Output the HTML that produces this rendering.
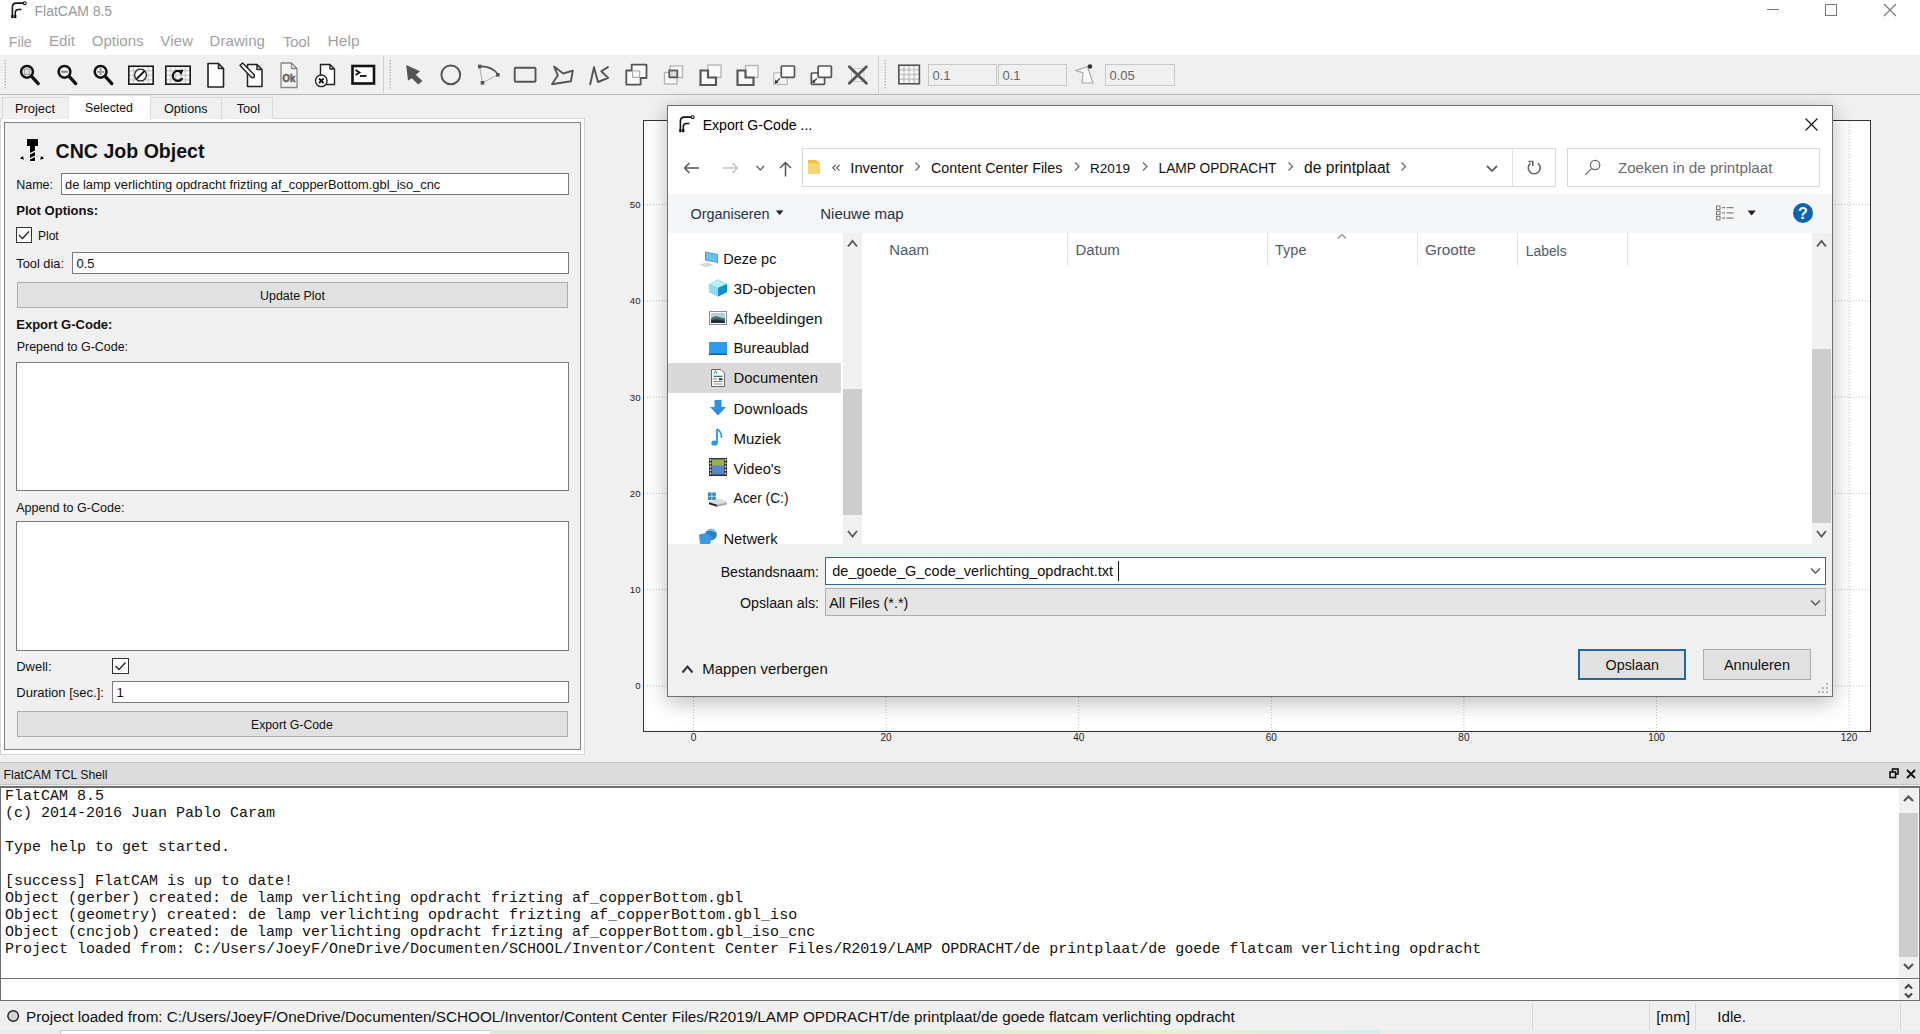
<!DOCTYPE html>
<html><head><meta charset="utf-8"><style>
html,body{margin:0;padding:0;}
body{width:1920px;height:1034px;overflow:hidden;position:relative;background:#f0f0f0;font-family:"Liberation Sans",sans-serif;}
.t{position:absolute;white-space:pre;line-height:20px;height:20px;}
.r{position:absolute;box-sizing:border-box;}
svg.r{overflow:visible;}
</style></head><body>
<div class="r" style="left:0px;top:0px;width:1920px;height:55px;background:#fff"></div>
<svg class="r" style="left:9px;top:0px;" width="20" height="20" viewBox="0 0 20 20"><path d="M3.4,18 V7.2 Q3.4,3.1 7.5,3.1 H14.3" fill="none" stroke="#111" stroke-width="1.6"/><circle cx="15.7" cy="3.2" r="1.45" fill="#fff" stroke="#111" stroke-width="1.1"/><path d="M6.3,18 V12.6 Q6.3,9.4 9.5,9.4 H11" fill="none" stroke="#111" stroke-width="1.5"/><circle cx="11.6" cy="9.5" r="1" fill="#333"/><rect x="2.4" y="15" width="2" height="3.2" fill="#000"/><rect x="5.3" y="15" width="2" height="3.2" fill="#000"/></svg>
<div class="t" style="left:34.60px;top:0.97px;font:13.95px 'Liberation Sans',sans-serif;line-height:20px;color:#999;">FlatCAM 8.5</div>
<div class="r" style="left:1767px;top:9px;width:12px;height:1px;background:#777"></div>
<div class="r" style="left:1825px;top:4px;width:12px;height:12px;border:1px solid #777"></div>
<svg class="r" style="left:1884px;top:4px;" width="12" height="12" viewBox="0 0 12 12"><path d="M0,0 L12,12 M12,0 L0,12" stroke="#777" stroke-width="1.1"/></svg>
<div class="t" style="left:8.75px;top:31.75px;font:14.27px 'Liberation Sans',sans-serif;line-height:20px;color:#a2a2a2;">File</div>
<div class="t" style="left:49.00px;top:31.47px;font:15.09px 'Liberation Sans',sans-serif;line-height:20px;color:#a2a2a2;">Edit</div>
<div class="t" style="left:91.70px;top:31.47px;font:15.09px 'Liberation Sans',sans-serif;line-height:20px;color:#a2a2a2;">Options</div>
<div class="t" style="left:160.30px;top:31.43px;font:15.21px 'Liberation Sans',sans-serif;line-height:20px;color:#a2a2a2;">View</div>
<div class="t" style="left:209.60px;top:31.46px;font:15.10px 'Liberation Sans',sans-serif;line-height:20px;color:#a2a2a2;">Drawing</div>
<div class="t" style="left:282.90px;top:31.58px;font:14.77px 'Liberation Sans',sans-serif;line-height:20px;color:#a2a2a2;">Tool</div>
<div class="t" style="left:327.60px;top:31.31px;font:15.56px 'Liberation Sans',sans-serif;line-height:20px;color:#a2a2a2;">Help</div>
<div class="r" style="left:0px;top:55px;width:1920px;height:39px;background:#f0f0f0"></div>
<div class="r" style="left:0px;top:94px;width:1920px;height:1px;background:#b9b9b9"></div>
<svg class="r" style="left:4px;top:60px;" width="3" height="30" viewBox="0 0 3 30"><rect x="0.5" y="0" width="1.5" height="1.5" fill="#b9b9b9"/><rect x="0.5" y="3" width="1.5" height="1.5" fill="#b9b9b9"/><rect x="0.5" y="6" width="1.5" height="1.5" fill="#b9b9b9"/><rect x="0.5" y="9" width="1.5" height="1.5" fill="#b9b9b9"/><rect x="0.5" y="12" width="1.5" height="1.5" fill="#b9b9b9"/><rect x="0.5" y="15" width="1.5" height="1.5" fill="#b9b9b9"/><rect x="0.5" y="18" width="1.5" height="1.5" fill="#b9b9b9"/><rect x="0.5" y="21" width="1.5" height="1.5" fill="#b9b9b9"/><rect x="0.5" y="24" width="1.5" height="1.5" fill="#b9b9b9"/><rect x="0.5" y="27" width="1.5" height="1.5" fill="#b9b9b9"/></svg>
<svg class="r" style="left:389px;top:60px;" width="3" height="30" viewBox="0 0 3 30"><rect x="0.5" y="0" width="1.5" height="1.5" fill="#b9b9b9"/><rect x="0.5" y="3" width="1.5" height="1.5" fill="#b9b9b9"/><rect x="0.5" y="6" width="1.5" height="1.5" fill="#b9b9b9"/><rect x="0.5" y="9" width="1.5" height="1.5" fill="#b9b9b9"/><rect x="0.5" y="12" width="1.5" height="1.5" fill="#b9b9b9"/><rect x="0.5" y="15" width="1.5" height="1.5" fill="#b9b9b9"/><rect x="0.5" y="18" width="1.5" height="1.5" fill="#b9b9b9"/><rect x="0.5" y="21" width="1.5" height="1.5" fill="#b9b9b9"/><rect x="0.5" y="24" width="1.5" height="1.5" fill="#b9b9b9"/><rect x="0.5" y="27" width="1.5" height="1.5" fill="#b9b9b9"/></svg>
<svg class="r" style="left:884px;top:60px;" width="3" height="30" viewBox="0 0 3 30"><rect x="0.5" y="0" width="1.5" height="1.5" fill="#b9b9b9"/><rect x="0.5" y="3" width="1.5" height="1.5" fill="#b9b9b9"/><rect x="0.5" y="6" width="1.5" height="1.5" fill="#b9b9b9"/><rect x="0.5" y="9" width="1.5" height="1.5" fill="#b9b9b9"/><rect x="0.5" y="12" width="1.5" height="1.5" fill="#b9b9b9"/><rect x="0.5" y="15" width="1.5" height="1.5" fill="#b9b9b9"/><rect x="0.5" y="18" width="1.5" height="1.5" fill="#b9b9b9"/><rect x="0.5" y="21" width="1.5" height="1.5" fill="#b9b9b9"/><rect x="0.5" y="24" width="1.5" height="1.5" fill="#b9b9b9"/><rect x="0.5" y="27" width="1.5" height="1.5" fill="#b9b9b9"/></svg>
<div class="r" style="left:383px;top:56px;width:1px;height:37px;background:#d0d0d0"></div>
<div class="r" style="left:878px;top:56px;width:1px;height:37px;background:#d0d0d0"></div>
<svg class="r" style="left:0px;top:0px;" width="400" height="95" viewBox="0 0 400 95"><circle cx="27" cy="71.8" r="5.9" fill="none" stroke="#111" stroke-width="2.5"/><path d="M31.6,76.4 L38.2,83.6" stroke="#111" stroke-width="3.3" stroke-linecap="round"/><rect x="24.3" y="69.1" width="5.4" height="5.4" fill="#ddd" stroke="#999" stroke-width="1"/><circle cx="64.5" cy="71.8" r="5.9" fill="none" stroke="#111" stroke-width="2.5"/><path d="M69.1,76.4 L75.7,83.6" stroke="#111" stroke-width="3.3" stroke-linecap="round"/><path d="M61,71.8 H68" stroke="#888" stroke-width="2"/><circle cx="100.6" cy="71.8" r="5.9" fill="none" stroke="#111" stroke-width="2.5"/><path d="M105.19999999999999,76.4 L111.8,83.6" stroke="#111" stroke-width="3.3" stroke-linecap="round"/><path d="M97,71.8 H104.2 M100.6,68.3 V75.3" stroke="#999" stroke-width="1.8"/><rect x="128.8" y="66.2" width="24.4" height="18" fill="#cfcfcf"/><ellipse cx="131.24" cy="68.45" rx="2.1" ry="1.7" fill="#fafafa"/><ellipse cx="131.24" cy="72.95" rx="2.1" ry="1.7" fill="#fafafa"/><ellipse cx="131.24" cy="77.45" rx="2.1" ry="1.7" fill="#fafafa"/><ellipse cx="131.24" cy="81.95" rx="2.1" ry="1.7" fill="#fafafa"/><ellipse cx="136.12" cy="68.45" rx="2.1" ry="1.7" fill="#fafafa"/><ellipse cx="136.12" cy="72.95" rx="2.1" ry="1.7" fill="#fafafa"/><ellipse cx="136.12" cy="77.45" rx="2.1" ry="1.7" fill="#fafafa"/><ellipse cx="136.12" cy="81.95" rx="2.1" ry="1.7" fill="#fafafa"/><ellipse cx="141.00" cy="68.45" rx="2.1" ry="1.7" fill="#fafafa"/><ellipse cx="141.00" cy="72.95" rx="2.1" ry="1.7" fill="#fafafa"/><ellipse cx="141.00" cy="77.45" rx="2.1" ry="1.7" fill="#fafafa"/><ellipse cx="141.00" cy="81.95" rx="2.1" ry="1.7" fill="#fafafa"/><ellipse cx="145.88" cy="68.45" rx="2.1" ry="1.7" fill="#fafafa"/><ellipse cx="145.88" cy="72.95" rx="2.1" ry="1.7" fill="#fafafa"/><ellipse cx="145.88" cy="77.45" rx="2.1" ry="1.7" fill="#fafafa"/><ellipse cx="145.88" cy="81.95" rx="2.1" ry="1.7" fill="#fafafa"/><ellipse cx="150.76" cy="68.45" rx="2.1" ry="1.7" fill="#fafafa"/><ellipse cx="150.76" cy="72.95" rx="2.1" ry="1.7" fill="#fafafa"/><ellipse cx="150.76" cy="77.45" rx="2.1" ry="1.7" fill="#fafafa"/><ellipse cx="150.76" cy="81.95" rx="2.1" ry="1.7" fill="#fafafa"/><rect x="128.8" y="66.2" width="24.4" height="18" fill="none" stroke="#111" stroke-width="1.5"/><circle cx="140.5" cy="75" r="5.9" fill="#fff" stroke="#222" stroke-width="1.3"/><path d="M136.6,78.9 L144.4,71.1" stroke="#111" stroke-width="1.9"/><rect x="165.8" y="66.2" width="24.4" height="18" fill="#cfcfcf"/><ellipse cx="168.24" cy="68.45" rx="2.1" ry="1.7" fill="#fafafa"/><ellipse cx="168.24" cy="72.95" rx="2.1" ry="1.7" fill="#fafafa"/><ellipse cx="168.24" cy="77.45" rx="2.1" ry="1.7" fill="#fafafa"/><ellipse cx="168.24" cy="81.95" rx="2.1" ry="1.7" fill="#fafafa"/><ellipse cx="173.12" cy="68.45" rx="2.1" ry="1.7" fill="#fafafa"/><ellipse cx="173.12" cy="72.95" rx="2.1" ry="1.7" fill="#fafafa"/><ellipse cx="173.12" cy="77.45" rx="2.1" ry="1.7" fill="#fafafa"/><ellipse cx="173.12" cy="81.95" rx="2.1" ry="1.7" fill="#fafafa"/><ellipse cx="178.00" cy="68.45" rx="2.1" ry="1.7" fill="#fafafa"/><ellipse cx="178.00" cy="72.95" rx="2.1" ry="1.7" fill="#fafafa"/><ellipse cx="178.00" cy="77.45" rx="2.1" ry="1.7" fill="#fafafa"/><ellipse cx="178.00" cy="81.95" rx="2.1" ry="1.7" fill="#fafafa"/><ellipse cx="182.88" cy="68.45" rx="2.1" ry="1.7" fill="#fafafa"/><ellipse cx="182.88" cy="72.95" rx="2.1" ry="1.7" fill="#fafafa"/><ellipse cx="182.88" cy="77.45" rx="2.1" ry="1.7" fill="#fafafa"/><ellipse cx="182.88" cy="81.95" rx="2.1" ry="1.7" fill="#fafafa"/><ellipse cx="187.76" cy="68.45" rx="2.1" ry="1.7" fill="#fafafa"/><ellipse cx="187.76" cy="72.95" rx="2.1" ry="1.7" fill="#fafafa"/><ellipse cx="187.76" cy="77.45" rx="2.1" ry="1.7" fill="#fafafa"/><ellipse cx="187.76" cy="81.95" rx="2.1" ry="1.7" fill="#fafafa"/><rect x="165.8" y="66.2" width="24.4" height="18" fill="none" stroke="#111" stroke-width="1.5"/><path d="M181.5,72.5 A5,5 0 1 0 182.3,78" fill="none" stroke="#111" stroke-width="2.2"/><path d="M177.5,70.5 L183.5,69.5 L181.5,75 Z" fill="#111"/><path d="M208,63.5 H218.5 L223.5,68.5 V87 H208 Z M218.5,63.5 V68.5 H223.5" fill="#fff" stroke="#222" stroke-width="1.6" stroke-linejoin="round"/><path d="M247.5,64.5 H257 L262,69.5 V86.5 H247.5 Z M257,64.5 V69.5 H262" fill="#fff" stroke="#222" stroke-width="1.5" stroke-linejoin="round"/><path d="M240,65.5 L242.5,63 L254.5,75 L254,77.5 L251.5,77.5 Z" fill="#fff" stroke="#222" stroke-width="1.4" stroke-linejoin="round"/><path d="M281,63 H291.5 L297,68.5 V87.5 H281 Z M291.5,63 V68.5 H297" fill="#f4f4f4" stroke="#888" stroke-width="1.3" stroke-linejoin="round"/><text x="282.6" y="81.8" style="font:bold 11.5px 'Liberation Sans'" fill="#666" stroke="#666" stroke-width="0.7" textLength="12.6" lengthAdjust="spacingAndGlyphs">Ok</text><path d="M320.5,64.5 H330 L334.5,69 V84.5 H320.5 Z M330,64.5 V69 H334.5" fill="#fff" stroke="#222" stroke-width="1.4" stroke-linejoin="round"/><circle cx="321.3" cy="80.8" r="5.8" fill="#fff" stroke="#222" stroke-width="1.4"/><path d="M319,78.5 L323.6,83.1 M323.6,78.5 L319,83.1" stroke="#111" stroke-width="1.8"/><rect x="352.5" y="66" width="21.5" height="17.5" fill="#fff" stroke="#111" stroke-width="2.6"/><path d="M355.5,70 L359.5,72.5 L355.5,75" fill="none" stroke="#111" stroke-width="1.8"/><path d="M360,76 H366.5" stroke="#111" stroke-width="1.8"/></svg>
<svg class="r" style="left:0px;top:0px;" width="880" height="95" viewBox="0 0 880 95"><path d="M406.2,65.1 L420,71.2 L415.8,74.8 L422.4,81 L418.3,84.6 L411.8,78.3 L408,80.5 Z" fill="#555"/><circle cx="450.8" cy="74.8" r="9.4" fill="none" stroke="#555" stroke-width="2"/><path d="M479.5,66.5 Q492,66 498,74.5" fill="none" stroke="#555" stroke-width="1.8"/><path d="M479.5,66.5 L482.5,83 L498,74.5" fill="none" stroke="#999" stroke-width="0.8"/><rect x="478" y="64.7" width="3.6" height="3.6" fill="#555"/><rect x="496" y="73" width="3.6" height="3.6" fill="#555"/><rect x="480.7" y="81" width="3.6" height="3.6" fill="#555"/><rect x="514.7" y="67.8" width="20.8" height="13.9" rx="1" fill="none" stroke="#555" stroke-width="1.9"/><path d="M554.1,66.6 L563.2,73.5 L572.8,70.6 L570.9,81.3 L552,84.2 L557.8,75.3 Z" fill="none" stroke="#555" stroke-width="1.9" stroke-linejoin="round"/><path d="M590.2,84.2 L594,67.2 L598,82 L608.2,77.9 L601.3,71.3 L607.9,67.1" fill="none" stroke="#555" stroke-width="1.9" stroke-linejoin="round" stroke-linecap="round"/><path d="M626.3,70.5 H631.7 V64.7 H646.5 V78 H640.6 V84.6 H626.3 Z" fill="#fafafa" stroke="#555" stroke-width="1.8" stroke-linejoin="round"/><path d="M632.6,70.9 H639.6 V77.3 H632.6 Z" fill="none" stroke="#b0b0b0" stroke-width="1.3" stroke-linejoin="round"/><rect x="664.5" y="72.5" width="12.5" height="11.5" fill="#f6f6f6" stroke="#b2b2b2" stroke-width="1.3"/><rect x="670" y="66" width="12.5" height="11.5" fill="#f6f6f6" stroke="#b2b2b2" stroke-width="1.3"/><rect x="669.3" y="70.5" width="8" height="6.8" fill="#ddd" stroke="#585858" stroke-width="1.8"/><rect x="708" y="65" width="13" height="12.5" fill="#f8f8f8" stroke="#b2b2b2" stroke-width="1.3"/><path d="M700.5,85 V70.5 H708 V77.5 H716 V85 Z" fill="#f8f8f8" stroke="#585858" stroke-width="2.2"/><rect x="745.5" y="65.5" width="12.5" height="12" fill="#f8f8f8" stroke="#b2b2b2" stroke-width="1.3"/><path d="M737.5,85 V70.5 H745.5 V77.5 H753.5 V85 Z" fill="#f8f8f8" stroke="#585858" stroke-width="2.2"/><rect x="773.8" y="72.8" width="13.5" height="11.6" fill="#f4f4f4" stroke="#b8b8b8" stroke-width="1.2"/><rect x="781.3" y="66" width="13.2" height="11.3" rx="0.8" fill="#fafafa" stroke="#555" stroke-width="1.7"/><path d="M775.2,83 L779.8,78.3" stroke="#333" stroke-width="1.2"/><path d="M774.6,83.6 L775.4,79.6 L778.6,82.8 Z" fill="#333"/><rect x="811.3" y="73" width="13.3" height="11.3" rx="0.8" fill="#f8f8f8" stroke="#555" stroke-width="1.7"/><rect x="818.2" y="66" width="13.2" height="11.3" rx="0.8" fill="#fafafa" stroke="#555" stroke-width="1.7"/><path d="M812.8,82.5 L816.8,78.5" stroke="#333" stroke-width="1.1"/><path d="M812.3,83 L812.9,79.6 L815.7,82.4 Z" fill="#333"/><rect x="851.5" y="68.5" width="12.5" height="13" fill="none" stroke="#cfcfcf" stroke-width="1"/><path d="M849.3,66.8 L866.4,83.2 M866.4,66.8 L849.3,83.2" stroke="#555" stroke-width="2.8" stroke-linecap="round"/></svg>
<svg class="r" style="left:0px;top:0px;" width="1200" height="95" viewBox="0 0 1200 95"><rect x="898.8" y="65.2" width="20.6" height="18.6" fill="#c8c8c8"/><ellipse cx="901.38" cy="67.53" rx="2" ry="1.8" fill="#fafafa"/><ellipse cx="901.38" cy="72.17" rx="2" ry="1.8" fill="#fafafa"/><ellipse cx="901.38" cy="76.83" rx="2" ry="1.8" fill="#fafafa"/><ellipse cx="901.38" cy="81.48" rx="2" ry="1.8" fill="#fafafa"/><ellipse cx="906.52" cy="67.53" rx="2" ry="1.8" fill="#fafafa"/><ellipse cx="906.52" cy="72.17" rx="2" ry="1.8" fill="#fafafa"/><ellipse cx="906.52" cy="76.83" rx="2" ry="1.8" fill="#fafafa"/><ellipse cx="906.52" cy="81.48" rx="2" ry="1.8" fill="#fafafa"/><ellipse cx="911.67" cy="67.53" rx="2" ry="1.8" fill="#fafafa"/><ellipse cx="911.67" cy="72.17" rx="2" ry="1.8" fill="#fafafa"/><ellipse cx="911.67" cy="76.83" rx="2" ry="1.8" fill="#fafafa"/><ellipse cx="911.67" cy="81.48" rx="2" ry="1.8" fill="#fafafa"/><ellipse cx="916.82" cy="67.53" rx="2" ry="1.8" fill="#fafafa"/><ellipse cx="916.82" cy="72.17" rx="2" ry="1.8" fill="#fafafa"/><ellipse cx="916.82" cy="76.83" rx="2" ry="1.8" fill="#fafafa"/><ellipse cx="916.82" cy="81.48" rx="2" ry="1.8" fill="#fafafa"/><rect x="898.8" y="65.2" width="20.6" height="18.6" fill="none" stroke="#555" stroke-width="1.6"/><path d="M1076,70.5 L1087.5,66.5 L1093,83 H1082 L1083,73 Z" fill="#f8f8f8" stroke="#aaa" stroke-width="1.2"/><circle cx="1090" cy="66.5" r="2.3" fill="#333"/></svg>
<div class="r" style="left:928px;top:64px;width:69px;height:22px;border:1px solid #c8c8c8;background:#f0f0f0"></div>
<div class="t" style="left:932.50px;top:65.79px;font:13.00px 'Liberation Sans',sans-serif;line-height:20px;color:#666;">0.1</div>
<div class="r" style="left:998px;top:64px;width:69px;height:22px;border:1px solid #c8c8c8;background:#f0f0f0"></div>
<div class="t" style="left:1002.50px;top:65.79px;font:13.00px 'Liberation Sans',sans-serif;line-height:20px;color:#666;">0.1</div>
<div class="r" style="left:1105px;top:64px;width:70px;height:22px;border:1px solid #c8c8c8;background:#f0f0f0"></div>
<div class="t" style="left:1109.50px;top:65.79px;font:13.00px 'Liberation Sans',sans-serif;line-height:20px;color:#666;">0.05</div>
<div class="r" style="left:0px;top:118px;width:585px;height:637px;background:#fff;border:1px solid #d6d6d6"></div>
<div class="r" style="left:4px;top:122px;width:577px;height:628px;border:1px solid #828282;background:#f0f0f0"></div>
<div class="r" style="left:2px;top:97px;width:67px;height:22px;background:#f0f0f0;border:1px solid #d9d9d9;border-bottom:none"></div>
<div class="r" style="left:68px;top:95px;width:83px;height:25px;background:#fff;border:1px solid #e6e6e6;border-bottom:none"></div>
<div class="r" style="left:150px;top:97px;width:72px;height:22px;background:#f0f0f0;border:1px solid #d9d9d9;border-bottom:none"></div>
<div class="r" style="left:221px;top:97px;width:52px;height:22px;background:#f0f0f0;border:1px solid #d9d9d9;border-bottom:none"></div>
<div class="t" style="left:15.00px;top:98.84px;font:12.85px 'Liberation Sans',sans-serif;line-height:20px;color:#111;">Project</div>
<div class="t" style="left:85.00px;top:97.92px;font:12.33px 'Liberation Sans',sans-serif;line-height:20px;color:#111;">Selected</div>
<div class="t" style="left:164.00px;top:98.92px;font:12.62px 'Liberation Sans',sans-serif;line-height:20px;color:#111;">Options</div>
<div class="t" style="left:236.70px;top:98.90px;font:12.70px 'Liberation Sans',sans-serif;line-height:20px;color:#111;">Tool</div>
<svg class="r" style="left:18px;top:137px;" width="28" height="26" viewBox="0 0 28 26"><g stroke="#fff" stroke-width="2.2" stroke-linejoin="round" fill="#fff"><path d="M9,2 H20 V9 H17 V13.5 L12,16 V9 H9 Z"/><path d="M12,17.5 L17,15 V18.5 L12,21 Z M12,22.5 L17,20 V24 H12 Z"/><path d="M1.9,21.4 L5,18.7 L5.9,22.8 Z M26.2,21.4 L23,18.7 L22.2,22.8 Z"/></g><g fill="#000"><path d="M9,2 H20 V9 H17 V13.5 L12,16 V9 H9 Z"/><path d="M12,17.5 L17,15 V18.5 L12,21 Z M12,22.5 L17,20 V24 H12 Z"/><path d="M1.9,21.4 L5,18.7 L5.9,22.8 Z M26.2,21.4 L23,18.7 L22.2,22.8 Z"/></g></svg>
<div class="t" style="left:55.60px;top:140.71px;font:bold 19.57px 'Liberation Sans',sans-serif;line-height:20px;color:#111;">CNC Job Object</div>
<div class="t" style="left:16.25px;top:175.08px;font:12.46px 'Liberation Sans',sans-serif;line-height:20px;color:#111;">Name:</div>
<div class="r" style="left:61px;top:173px;width:508px;height:22px;background:#fff;border:1px solid #7a7a7a"></div>
<div class="t" style="left:65.00px;top:174.94px;font:12.87px 'Liberation Sans',sans-serif;line-height:20px;color:#111;">de lamp verlichting opdracht frizting af_copperBottom.gbl_iso_cnc</div>
<div class="t" style="left:16.25px;top:200.77px;font:bold 13.06px 'Liberation Sans',sans-serif;line-height:20px;color:#111;">Plot Options:</div>
<div class="r" style="left:16px;top:227px;width:16px;height:16px;background:#fff;border:1px solid #333"></div>
<svg class="r" style="left:16px;top:227px;" width="16" height="16" viewBox="0 0 16 16"><path d="M3,8 L6.5,11.5 L13,4.5" fill="none" stroke="#222" stroke-width="1.3"/></svg>
<div class="t" style="left:38.00px;top:226.14px;font:12.01px 'Liberation Sans',sans-serif;line-height:20px;color:#111;">Plot</div>
<div class="t" style="left:16.25px;top:253.95px;font:12.83px 'Liberation Sans',sans-serif;line-height:20px;color:#111;">Tool dia:</div>
<div class="r" style="left:72px;top:252px;width:497px;height:22px;background:#fff;border:1px solid #7a7a7a"></div>
<div class="t" style="left:76.50px;top:253.89px;font:13.00px 'Liberation Sans',sans-serif;line-height:20px;color:#111;">0.5</div>
<div class="r" style="left:17px;top:282px;width:551px;height:26px;background:#e1e1e1;border:1px solid #adadad"></div>
<div class="t" style="left:260.00px;top:285.99px;font:12.44px 'Liberation Sans',sans-serif;line-height:20px;color:#111;">Update Plot</div>
<div class="t" style="left:16.25px;top:315.48px;font:bold 13.03px 'Liberation Sans',sans-serif;line-height:20px;color:#111;">Export G-Code:</div>
<div class="t" style="left:16.70px;top:337.49px;font:12.44px 'Liberation Sans',sans-serif;line-height:20px;color:#111;">Prepend to G-Code:</div>
<div class="r" style="left:16px;top:362px;width:553px;height:129px;background:#fff;border:1px solid #7a7a7a"></div>
<div class="t" style="left:16.25px;top:497.55px;font:12.56px 'Liberation Sans',sans-serif;line-height:20px;color:#111;">Append to G-Code:</div>
<div class="r" style="left:16px;top:521px;width:553px;height:130px;background:#fff;border:1px solid #7a7a7a"></div>
<div class="t" style="left:16.25px;top:656.76px;font:12.96px 'Liberation Sans',sans-serif;line-height:20px;color:#111;">Dwell:</div>
<div class="r" style="left:112px;top:658px;width:17px;height:16px;background:#fff;border:1px solid #333"></div>
<svg class="r" style="left:112px;top:658px;" width="17" height="16" viewBox="0 0 17 16"><path d="M3.5,8 L7,11.5 L13.5,4.5" fill="none" stroke="#222" stroke-width="1.3"/></svg>
<div class="t" style="left:16.25px;top:683.27px;font:13.06px 'Liberation Sans',sans-serif;line-height:20px;color:#111;">Duration [sec.]:</div>
<div class="r" style="left:112px;top:681px;width:457px;height:22px;background:#fff;border:1px solid #7a7a7a"></div>
<div class="t" style="left:116.60px;top:683.29px;font:13.00px 'Liberation Sans',sans-serif;line-height:20px;color:#111;">1</div>
<div class="r" style="left:17px;top:711px;width:551px;height:26px;background:#e1e1e1;border:1px solid #adadad"></div>
<div class="t" style="left:251.00px;top:715.25px;font:12.26px 'Liberation Sans',sans-serif;line-height:20px;color:#111;">Export G-Code</div>
<div class="r" style="left:643px;top:120px;width:1228px;height:612px;background:#fff;border:1px solid #333"></div>
<svg class="r" style="left:0px;top:0px;" width="1920" height="760" viewBox="0 0 1920 760"><path d="M693.5,121 V731" stroke="#c0c0c0" stroke-width="1" stroke-dasharray="1 2"/><path d="M886.1,121 V731" stroke="#c0c0c0" stroke-width="1" stroke-dasharray="1 2"/><path d="M1078.7,121 V731" stroke="#c0c0c0" stroke-width="1" stroke-dasharray="1 2"/><path d="M1271.3,121 V731" stroke="#c0c0c0" stroke-width="1" stroke-dasharray="1 2"/><path d="M1463.9,121 V731" stroke="#c0c0c0" stroke-width="1" stroke-dasharray="1 2"/><path d="M1656.5,121 V731" stroke="#c0c0c0" stroke-width="1" stroke-dasharray="1 2"/><path d="M1849.1,121 V731" stroke="#c0c0c0" stroke-width="1" stroke-dasharray="1 2"/><path d="M644,686.0 H1871" stroke="#c0c0c0" stroke-width="1" stroke-dasharray="1 2"/><path d="M644,589.7 H1871" stroke="#c0c0c0" stroke-width="1" stroke-dasharray="1 2"/><path d="M644,493.4 H1871" stroke="#c0c0c0" stroke-width="1" stroke-dasharray="1 2"/><path d="M644,397.1 H1871" stroke="#c0c0c0" stroke-width="1" stroke-dasharray="1 2"/><path d="M644,300.8 H1871" stroke="#c0c0c0" stroke-width="1" stroke-dasharray="1 2"/><path d="M644,204.5 H1871" stroke="#c0c0c0" stroke-width="1" stroke-dasharray="1 2"/></svg>
<div class="t" style="left:690.72px;top:728.03px;font:10.00px 'Liberation Sans',sans-serif;line-height:20px;color:#222;">0</div>
<div class="t" style="left:880.54px;top:728.03px;font:10.00px 'Liberation Sans',sans-serif;line-height:20px;color:#222;">20</div>
<div class="t" style="left:1073.14px;top:728.03px;font:10.00px 'Liberation Sans',sans-serif;line-height:20px;color:#222;">40</div>
<div class="t" style="left:1265.74px;top:728.03px;font:10.00px 'Liberation Sans',sans-serif;line-height:20px;color:#222;">60</div>
<div class="t" style="left:1458.34px;top:728.03px;font:10.00px 'Liberation Sans',sans-serif;line-height:20px;color:#222;">80</div>
<div class="t" style="left:1648.16px;top:728.03px;font:10.00px 'Liberation Sans',sans-serif;line-height:20px;color:#222;">100</div>
<div class="t" style="left:1840.76px;top:728.03px;font:10.00px 'Liberation Sans',sans-serif;line-height:20px;color:#222;">120</div>
<div class="t" style="left:635.16px;top:676.47px;font:9.60px 'Liberation Sans',sans-serif;line-height:20px;color:#222;">0</div>
<div class="t" style="left:629.82px;top:580.17px;font:9.60px 'Liberation Sans',sans-serif;line-height:20px;color:#222;">10</div>
<div class="t" style="left:629.82px;top:483.87px;font:9.60px 'Liberation Sans',sans-serif;line-height:20px;color:#222;">20</div>
<div class="t" style="left:629.82px;top:387.57px;font:9.60px 'Liberation Sans',sans-serif;line-height:20px;color:#222;">30</div>
<div class="t" style="left:629.82px;top:291.27px;font:9.60px 'Liberation Sans',sans-serif;line-height:20px;color:#222;">40</div>
<div class="t" style="left:629.82px;top:194.97px;font:9.60px 'Liberation Sans',sans-serif;line-height:20px;color:#222;">50</div>
<div class="r" style="left:0px;top:762px;width:1920px;height:23px;background:#dcdcdc;border-top:1px solid #c6c6c6;border-bottom:1px solid #c6c6c6"></div>
<div class="t" style="left:3.60px;top:764.66px;font:12.23px 'Liberation Sans',sans-serif;line-height:20px;color:#111;">FlatCAM TCL Shell</div>
<svg class="r" style="left:1889px;top:768px;" width="10" height="11" viewBox="0 0 10 11"><rect x="3.5" y="1" width="5.5" height="5" fill="none" stroke="#111" stroke-width="1.6"/><rect x="1" y="4" width="5.5" height="5.5" fill="#dcdcdc" stroke="#111" stroke-width="1.6"/></svg>
<svg class="r" style="left:1906px;top:769px;" width="10" height="10" viewBox="0 0 10 10"><path d="M1,1 L9,9 M9,1 L1,9" stroke="#111" stroke-width="1.8"/></svg>
<div class="r" style="left:0px;top:786px;width:1920px;height:194px;background:#fff;border:1px solid #6e6e6e;border-width:2px 1px 2px 1px"></div>
<div class="r" style="left:1899px;top:788px;width:19px;height:190px;background:#f0f0f0"></div>
<div class="r" style="left:1899px;top:813px;width:19px;height:144px;background:#cdcdcd"></div>
<svg class="r" style="left:1899px;top:788px;" width="19" height="190" viewBox="0 0 19 190"><path d="M5,13 L9.5,8.5 L14,13" fill="none" stroke="#555" stroke-width="2.2"/><path d="M5,176 L9.5,180.5 L14,176" fill="none" stroke="#555" stroke-width="2.2"/></svg>
<div class="t" style="left:5.00px;top:786.51px;font:15.00px 'Liberation Mono',monospace;line-height:20px;color:#111;">FlatCAM 8.5</div>
<div class="t" style="left:5.00px;top:803.51px;font:15.00px 'Liberation Mono',monospace;line-height:20px;color:#111;">(c) 2014-2016 Juan Pablo Caram</div>
<div class="t" style="left:5.00px;top:837.51px;font:15.00px 'Liberation Mono',monospace;line-height:20px;color:#111;">Type help to get started.</div>
<div class="t" style="left:5.00px;top:871.51px;font:15.00px 'Liberation Mono',monospace;line-height:20px;color:#111;">[success] FlatCAM is up to date!</div>
<div class="t" style="left:5.00px;top:888.51px;font:15.00px 'Liberation Mono',monospace;line-height:20px;color:#111;">Object (gerber) created: de lamp verlichting opdracht frizting af_copperBottom.gbl</div>
<div class="t" style="left:5.00px;top:905.51px;font:15.00px 'Liberation Mono',monospace;line-height:20px;color:#111;">Object (geometry) created: de lamp verlichting opdracht frizting af_copperBottom.gbl_iso</div>
<div class="t" style="left:5.00px;top:922.51px;font:15.00px 'Liberation Mono',monospace;line-height:20px;color:#111;">Object (cncjob) created: de lamp verlichting opdracht frizting af_copperBottom.gbl_iso_cnc</div>
<div class="t" style="left:5.00px;top:939.51px;font:15.00px 'Liberation Mono',monospace;line-height:20px;color:#111;">Project loaded from: C:/Users/JoeyF/OneDrive/Documenten/SCHOOL/Inventor/Content Center Files/R2019/LAMP OPDRACHT/de printplaat/de goede flatcam verlichting opdracht</div>
<div class="r" style="left:0px;top:979px;width:1920px;height:22px;background:#fff;border:1px solid #6e6e6e;border-top:none"></div>
<div class="r" style="left:1899px;top:980px;width:19px;height:20px;background:#f0f0f0"></div>
<svg class="r" style="left:1899px;top:980px;" width="19" height="20" viewBox="0 0 19 20"><path d="M6,8.5 L9.5,5 L13,8.5" fill="none" stroke="#444" stroke-width="2"/><path d="M6,13.5 L9.5,17 L13,13.5" fill="none" stroke="#444" stroke-width="2"/></svg>
<svg class="r" style="left:1906px;top:1016px;" width="14" height="14" viewBox="0 0 14 14"><rect x="9" y="2" width="2" height="2" fill="#c4c4c4"/><rect x="5" y="6" width="2" height="2" fill="#c4c4c4"/><rect x="9" y="6" width="2" height="2" fill="#c4c4c4"/><rect x="1" y="10" width="2" height="2" fill="#c4c4c4"/><rect x="5" y="10" width="2" height="2" fill="#c4c4c4"/><rect x="9" y="10" width="2" height="2" fill="#c4c4c4"/></svg>
<div class="r" style="left:0px;top:1001px;width:1920px;height:33px;background:#f0f0f0"></div>
<svg class="r" style="left:6px;top:1009px;" width="14" height="14" viewBox="0 0 14 14"><circle cx="7.2" cy="7" r="5.3" fill="#d4d4d4" stroke="#222" stroke-width="1.4"/></svg>
<div class="t" style="left:26.00px;top:1006.60px;font:15.28px 'Liberation Sans',sans-serif;line-height:20px;color:#111;">Project loaded from: C:/Users/JoeyF/OneDrive/Documenten/SCHOOL/Inventor/Content Center Files/R2019/LAMP OPDRACHT/de printplaat/de goede flatcam verlichting opdracht</div>
<div class="r" style="left:1532px;top:1003px;width:1px;height:27px;background:#dadada"></div>
<div class="r" style="left:1649px;top:1003px;width:1px;height:27px;background:#dadada"></div>
<div class="r" style="left:1695px;top:1003px;width:1px;height:27px;background:#dadada"></div>
<div class="r" style="left:1900px;top:1003px;width:1px;height:27px;background:#dadada"></div>
<div class="t" style="left:1656.30px;top:1006.64px;font:15.17px 'Liberation Sans',sans-serif;line-height:20px;color:#111;">[mm]</div>
<div class="t" style="left:1717.30px;top:1006.64px;font:15.18px 'Liberation Sans',sans-serif;line-height:20px;color:#111;">Idle.</div>
<div class="r" style="left:0px;top:1030px;width:1920px;height:4px;background:#ececec"></div>
<div class="r" style="left:60px;top:1030px;width:430px;height:4px;background:#fff;border-top:1px solid #c8c8c8;border-left:1px solid #c8c8c8"></div>
<div class="r" style="left:490px;top:1030px;width:890px;height:4px;background:linear-gradient(90deg,#d6ecd6 0%,#dcefd0 50%,#e6f2c8 75%,#d4eef0 100%)"></div>
<div class="r" style="left:667px;top:105px;width:1166px;height:592px;background:#f0f0f0;border:1px solid #707070;box-shadow:0 5px 20px rgba(0,0,0,0.28)"></div>
<div class="r" style="left:668px;top:106px;width:1164px;height:88px;background:#fff"></div>
<svg class="r" style="left:677px;top:114px;" width="20" height="20" viewBox="0 0 20 20"><path d="M3.4,18 V7.2 Q3.4,3.1 7.5,3.1 H14.3" fill="none" stroke="#111" stroke-width="1.6"/><circle cx="15.7" cy="3.2" r="1.45" fill="#fff" stroke="#111" stroke-width="1.1"/><path d="M6.3,18 V12.6 Q6.3,9.4 9.5,9.4 H11" fill="none" stroke="#111" stroke-width="1.5"/><circle cx="11.6" cy="9.5" r="1" fill="#333"/><rect x="2.4" y="15" width="2" height="3.2" fill="#000"/><rect x="5.3" y="15" width="2" height="3.2" fill="#000"/></svg>
<div class="t" style="left:702.70px;top:114.92px;font:14.09px 'Liberation Sans',sans-serif;line-height:20px;color:#000;">Export G-Code ...</div>
<svg class="r" style="left:1805px;top:118px;" width="13" height="13" viewBox="0 0 13 13"><path d="M0.5,0.5 L12.5,12.5 M12.5,0.5 L0.5,12.5" stroke="#111" stroke-width="1.1"/></svg>
<svg class="r" style="left:0px;top:0px;" width="900" height="200" viewBox="0 0 900 200"><path d="M684.5,168 H699 M684.5,168 L689.5,163 M684.5,168 L689.5,173" fill="none" stroke="#555" stroke-width="1.5"/><path d="M723,168 H737.5 M737.5,168 L732.5,163 M737.5,168 L732.5,173" fill="none" stroke="#c4c4c4" stroke-width="1.5"/><path d="M756.5,166 L760.3,170 L764,166" fill="none" stroke="#666" stroke-width="1.4"/><path d="M785.5,176.5 V162.5 M780,168 L785.5,162.5 L791,168" fill="none" stroke="#555" stroke-width="1.5"/></svg>
<div class="r" style="left:802px;top:148px;width:754px;height:39px;background:#fff;border:1px solid #d9d9d9"></div>
<div class="r" style="left:1512px;top:149px;width:1px;height:37px;background:#e3e3e3"></div>
<div class="r" style="left:1567px;top:148px;width:253px;height:39px;background:#fff;border:1px solid #d9d9d9"></div>
<svg class="r" style="left:0px;top:0px;" width="1920" height="200" viewBox="0 0 1920 200"><path d="M808,160 H816 L820,163 V174 H808 Z" fill="#f0c048"/><path d="M808,163 H820 V174 H808 Z" fill="#f7d670"/><path d="M835.5,165 L832.8,167.8 L835.5,170.6 M839.5,165 L836.8,167.8 L839.5,170.6" fill="none" stroke="#555" stroke-width="1.1"/><path d="M915.5,162.5 L919.5,166.5 L915.5,170.5" fill="none" stroke="#666" stroke-width="1.2"/><path d="M1075,162.5 L1079,166.5 L1075,170.5" fill="none" stroke="#666" stroke-width="1.2"/><path d="M1143,162.5 L1147,166.5 L1143,170.5" fill="none" stroke="#666" stroke-width="1.2"/><path d="M1288.5,162.5 L1292.5,166.5 L1288.5,170.5" fill="none" stroke="#666" stroke-width="1.2"/><path d="M1401.5,162.5 L1405.5,166.5 L1401.5,170.5" fill="none" stroke="#666" stroke-width="1.2"/><path d="M1487,166 L1492,171 L1497,166" fill="none" stroke="#666" stroke-width="1.8"/><path d="M1538,163.4 A5.9,5.9 0 1 1 1530.4,163.4" fill="none" stroke="#666" stroke-width="1.6"/><path d="M1528.3,161.6 H1532.8 V166" fill="none" stroke="#666" stroke-width="1.5"/><circle cx="1595.1" cy="165" r="4.7" fill="none" stroke="#666" stroke-width="1.2"/><path d="M1591.8,168.4 L1585.4,174.8" stroke="#666" stroke-width="1.2"/></svg>
<div class="t" style="left:850.30px;top:158.19px;font:14.75px 'Liberation Sans',sans-serif;line-height:20px;color:#111;">Inventor</div>
<div class="t" style="left:931.00px;top:158.33px;font:14.34px 'Liberation Sans',sans-serif;line-height:20px;color:#111;">Content Center Files</div>
<div class="t" style="left:1090.00px;top:158.59px;font:13.57px 'Liberation Sans',sans-serif;line-height:20px;color:#111;">R2019</div>
<div class="t" style="left:1158.60px;top:158.54px;font:13.73px 'Liberation Sans',sans-serif;line-height:20px;color:#111;">LAMP OPDRACHT</div>
<div class="t" style="left:1304.00px;top:157.88px;font:15.62px 'Liberation Sans',sans-serif;line-height:20px;color:#111;">de printplaat</div>
<div class="t" style="left:1617.90px;top:158.03px;font:15.20px 'Liberation Sans',sans-serif;line-height:20px;color:#6d6d6d;">Zoeken in de printplaat</div>
<div class="r" style="left:668px;top:194px;width:1164px;height:39px;background:#f5f6f7"></div>
<div class="t" style="left:690.50px;top:204.21px;font:14.39px 'Liberation Sans',sans-serif;line-height:20px;color:#1e3250;">Organiseren</div>
<svg class="r" style="left:775px;top:210px;" width="10" height="6" viewBox="0 0 10 6"><path d="M0.8,0.5 H8.5 L4.65,5 Z" fill="#222"/></svg>
<div class="t" style="left:820.30px;top:204.00px;font:14.99px 'Liberation Sans',sans-serif;line-height:20px;color:#1e3250;">Nieuwe map</div>
<svg class="r" style="left:1715px;top:205px;" width="20" height="16" viewBox="0 0 20 16"><rect x="1.5" y="1" width="3.5" height="3.5" fill="none" stroke="#777" stroke-width="1"/><rect x="1.5" y="6.2" width="3.5" height="3.5" fill="none" stroke="#777" stroke-width="1"/><rect x="1.5" y="11.4" width="3.5" height="3.5" fill="none" stroke="#777" stroke-width="1"/><path d="M7,2.7 H10 M11.5,2.7 H18.5 M7,7.9 H10 M11.5,7.9 H18.5 M7,13.1 H10 M11.5,13.1 H18.5" stroke="#666" stroke-width="1"/></svg>
<svg class="r" style="left:1746.5px;top:210px;" width="10" height="6" viewBox="0 0 10 6"><path d="M0.5,0.5 H8.8 L4.65,5.5 Z" fill="#222"/></svg>
<svg class="r" style="left:1792px;top:202px;" width="22" height="22" viewBox="0 0 22 22"><circle cx="11" cy="11" r="10" fill="#0a64b0"/><text x="11" y="17.2" text-anchor="middle" font-family="Liberation Sans" font-weight="bold" font-size="16" fill="#fff">?</text></svg>
<div class="r" style="left:668px;top:233px;width:175px;height:311px;background:#fff"></div>
<div class="r" style="left:668px;top:363px;width:173px;height:30px;background:#d9d9d9"></div>
<div class="r" style="left:843px;top:233px;width:19px;height:311px;background:#f0f0f0"></div>
<div class="r" style="left:843px;top:389px;width:19px;height:126px;background:#cdcdcd"></div>
<svg class="r" style="left:843px;top:233px;" width="19" height="311" viewBox="0 0 19 311"><path d="M5,13.5 L9.5,8 L14,13.5" fill="none" stroke="#555" stroke-width="1.8"/><path d="M5,298 L9.5,303.5 L14,298" fill="none" stroke="#555" stroke-width="1.8"/></svg>
<svg class="r" style="left:0px;top:0px;clip-path:inset(233px 0 16px 0)" width="900" height="560" viewBox="0 0 900 560"><path d="M705,251.5 L718,254 V263 L705,260.5 Z" fill="#3c9ee0"/><path d="M706,252.5 L717,254.6 V262 L706,259.7 Z" fill="#6cc0f0"/><path d="M699,264.5 L707,262.5 L714,265 L706,267.5 Z" fill="#d8d8d8"/><path d="M709,284 L718,279.5 L727,284 V292 L718,296.5 L709,292 Z" fill="#28a8d8"/><path d="M709,284 L718,288 V296.5 L709,292 Z" fill="#8fdcf0"/><path d="M709,284 L718,279.5 L727,284 L718,288 Z" fill="#b8ecf8"/><path d="M718,288 L727,284 V292 L718,296.5 Z" fill="#1590c8"/><rect x="709.5" y="311.5" width="17" height="13" fill="#fff" stroke="#8a9096" stroke-width="1"/><rect x="711" y="313" width="14" height="10" fill="#b4cde0"/><path d="M711,318.5 Q715,315 719,317 Q722,318.5 725,318 V323 H711 Z" fill="#4a6a70"/><path d="M711,320.5 Q716,318.5 725,321 V323 H711 Z" fill="#1c3236"/><rect x="709" y="342" width="18" height="13" fill="#2c9cf0"/><rect x="709" y="353.5" width="18" height="1.5" fill="#1060a8"/><path d="M711.5,369.5 H721 L724.5,373 V386.5 H711.5 Z" fill="#fff" stroke="#6a6a6a" stroke-width="1"/><path d="M713.5,376.3 H722.5" stroke="#2a5a8a" stroke-width="1.2"/><path d="M713.5,379 H717.5 M713.5,381.5 H722.5 M713.5,384 H722.5" stroke="#777" stroke-width="0.9"/><rect x="719" y="378.2" width="3.5" height="2" fill="#333"/><path d="M714,374 L715.5,370.5 L717,374" fill="none" stroke="#3a7ab0" stroke-width="0.9"/><path d="M714.5,400 H721.5 V407 H726 L718,415.5 L710,407 H714.5 Z" fill="#2e8ee0"/><path d="M717,429 V442.5" stroke="#2b9ae0" stroke-width="1.8"/><ellipse cx="714.5" cy="443" rx="3.2" ry="2.6" fill="#2b9ae0"/><path d="M717,429 Q722,432 721.5,438" fill="none" stroke="#2b9ae0" stroke-width="1.6"/><rect x="709" y="458" width="18" height="18" fill="#333"/><rect x="712" y="459.5" width="12" height="15" fill="#5a86c8"/><rect x="712" y="459.5" width="12" height="6" fill="#9ab048"/><rect x="709.8" y="459.0" width="1.5" height="1.8" fill="#ddd"/><rect x="724.7" y="459.0" width="1.5" height="1.8" fill="#ddd"/><rect x="709.8" y="462.4" width="1.5" height="1.8" fill="#ddd"/><rect x="724.7" y="462.4" width="1.5" height="1.8" fill="#ddd"/><rect x="709.8" y="465.8" width="1.5" height="1.8" fill="#ddd"/><rect x="724.7" y="465.8" width="1.5" height="1.8" fill="#ddd"/><rect x="709.8" y="469.2" width="1.5" height="1.8" fill="#ddd"/><rect x="724.7" y="469.2" width="1.5" height="1.8" fill="#ddd"/><rect x="709.8" y="472.6" width="1.5" height="1.8" fill="#ddd"/><rect x="724.7" y="472.6" width="1.5" height="1.8" fill="#ddd"/><rect x="708" y="492.5" width="3.6" height="3.4" fill="#2a8ec0"/><rect x="712.2" y="492.5" width="3.6" height="3.4" fill="#2a8ec0"/><rect x="708" y="496.5" width="3.6" height="3.4" fill="#2a8ec0"/><rect x="712.2" y="496.5" width="3.6" height="3.4" fill="#2a8ec0"/><path d="M711,500.5 L721,499 L727,501.5 L727,504 L717,506.5 L709,503.5 Z" fill="#dcdcdc"/><path d="M709,502.3 L717,504.8 L717,506.8 L709,504.3 Z" fill="#222"/><path d="M717,504.8 L727,502.5 V504.5 L717,506.8 Z" fill="#aaa"/><circle cx="711" cy="534.5" r="5.8" fill="#2f7fb8"/><path d="M706.5,531 Q711,528.5 715.5,532" stroke="#a8d8f8" stroke-width="1.2" fill="none"/><path d="M699,534.5 L706,533 L712,537 L710,544 L700,544 Z" fill="#3a9ae8"/></svg>
<div class="t" style="left:723.30px;top:248.98px;font:14.47px 'Liberation Sans',sans-serif;line-height:20px;color:#111;">Deze pc</div>
<div class="t" style="left:733.50px;top:278.90px;font:15.28px 'Liberation Sans',sans-serif;line-height:20px;color:#111;">3D-objecten</div>
<div class="t" style="left:733.50px;top:308.52px;font:15.24px 'Liberation Sans',sans-serif;line-height:20px;color:#111;">Afbeeldingen</div>
<div class="t" style="left:733.50px;top:338.48px;font:14.76px 'Liberation Sans',sans-serif;line-height:20px;color:#111;">Bureaublad</div>
<div class="t" style="left:733.50px;top:368.43px;font:14.90px 'Liberation Sans',sans-serif;line-height:20px;color:#111;">Documenten</div>
<div class="t" style="left:733.50px;top:398.59px;font:15.04px 'Liberation Sans',sans-serif;line-height:20px;color:#111;">Downloads</div>
<div class="t" style="left:733.50px;top:428.60px;font:15.00px 'Liberation Sans',sans-serif;line-height:20px;color:#111;">Muziek</div>
<div class="t" style="left:733.50px;top:458.70px;font:14.70px 'Liberation Sans',sans-serif;line-height:20px;color:#111;">Video's</div>
<div class="t" style="left:733.50px;top:489.23px;font:13.75px 'Liberation Sans',sans-serif;line-height:20px;color:#111;">Acer (C:)</div>
<div class="r" style="left:668px;top:520px;width:175px;height:24px;overflow:hidden">
<div class="t" style="left:55.4px;top:8.6px;font:14.8px 'Liberation Sans',sans-serif;line-height:20px;color:#111">Netwerk</div></div>
<div class="r" style="left:862px;top:233px;width:950px;height:311px;background:#fff"></div>
<div class="r" style="left:1067px;top:233px;width:1px;height:33px;background:#e5e5e5"></div>
<div class="r" style="left:1267px;top:233px;width:1px;height:33px;background:#e5e5e5"></div>
<div class="r" style="left:1417px;top:233px;width:1px;height:33px;background:#e5e5e5"></div>
<div class="r" style="left:1517px;top:233px;width:1px;height:33px;background:#e5e5e5"></div>
<div class="r" style="left:1627px;top:233px;width:1px;height:33px;background:#e5e5e5"></div>
<div class="t" style="left:889.30px;top:240.24px;font:14.88px 'Liberation Sans',sans-serif;line-height:20px;color:#505c6a;">Naam</div>
<div class="t" style="left:1075.50px;top:240.19px;font:15.04px 'Liberation Sans',sans-serif;line-height:20px;color:#505c6a;">Datum</div>
<div class="t" style="left:1275.00px;top:240.36px;font:14.53px 'Liberation Sans',sans-serif;line-height:20px;color:#505c6a;">Type</div>
<div class="t" style="left:1425.00px;top:240.13px;font:15.20px 'Liberation Sans',sans-serif;line-height:20px;color:#505c6a;">Grootte</div>
<div class="t" style="left:1525.70px;top:240.58px;font:13.91px 'Liberation Sans',sans-serif;line-height:20px;color:#505c6a;">Labels</div>
<svg class="r" style="left:1337px;top:233px;" width="11" height="7" viewBox="0 0 11 7"><path d="M1,5.5 L5,1.5 L9,5.5" fill="none" stroke="#888" stroke-width="1.1"/></svg>
<div class="r" style="left:1812px;top:233px;width:20px;height:311px;background:#f0f0f0"></div>
<div class="r" style="left:1812px;top:349px;width:19px;height:174px;background:#cdcdcd"></div>
<svg class="r" style="left:1812px;top:233px;" width="19" height="311" viewBox="0 0 19 311"><path d="M5,13.5 L9.5,8 L14,13.5" fill="none" stroke="#555" stroke-width="1.8"/><path d="M5,298 L9.5,303.5 L14,298" fill="none" stroke="#555" stroke-width="1.8"/></svg>
<div class="t" style="left:720.70px;top:562.40px;font:14.15px 'Liberation Sans',sans-serif;line-height:20px;color:#111;">Bestandsnaam:</div>
<div class="r" style="left:825px;top:557px;width:1001px;height:28px;background:#fff;border:1px solid #2a6a98"></div>
<div class="t" style="left:832.30px;top:561.46px;font:14.52px 'Liberation Sans',sans-serif;line-height:20px;color:#111;">de_goede_G_code_verlichting_opdracht.txt</div>
<div class="r" style="left:1118px;top:561px;width:1px;height:20px;background:#111"></div>
<svg class="r" style="left:1810px;top:567px;" width="12" height="8" viewBox="0 0 12 8"><path d="M1,1.5 L5.5,6 L10,1.5" fill="none" stroke="#555" stroke-width="1.3"/></svg>
<div class="t" style="left:740.00px;top:593.37px;font:14.21px 'Liberation Sans',sans-serif;line-height:20px;color:#111;">Opslaan als:</div>
<div class="r" style="left:825px;top:588px;width:1001px;height:28px;background:#e5e5e5;border:1px solid #adadad"></div>
<div class="t" style="left:829.30px;top:592.82px;font:14.36px 'Liberation Sans',sans-serif;line-height:20px;color:#111;">All Files (*.*)</div>
<svg class="r" style="left:1810px;top:599px;" width="12" height="8" viewBox="0 0 12 8"><path d="M1,1.5 L5.5,6 L10,1.5" fill="none" stroke="#555" stroke-width="1.3"/></svg>
<svg class="r" style="left:681px;top:664px;" width="13" height="10" viewBox="0 0 13 10"><path d="M1.5,8.5 L6.5,2.5 L11.5,8.5" fill="none" stroke="#333" stroke-width="2"/></svg>
<div class="t" style="left:702.30px;top:659.12px;font:14.94px 'Liberation Sans',sans-serif;line-height:20px;color:#111;">Mappen verbergen</div>
<div class="r" style="left:1578px;top:649px;width:108px;height:31px;background:#e1e1e1;border:2px solid #1f68a6"></div>
<div class="t" style="left:1605.60px;top:654.73px;font:14.34px 'Liberation Sans',sans-serif;line-height:20px;color:#111;">Opslaan</div>
<div class="r" style="left:1703px;top:649px;width:108px;height:31px;background:#e1e1e1;border:1px solid #adadad"></div>
<div class="t" style="left:1723.90px;top:654.67px;font:14.50px 'Liberation Sans',sans-serif;line-height:20px;color:#111;">Annuleren</div>
<svg class="r" style="left:1816px;top:681px;" width="14" height="14" viewBox="0 0 14 14"><rect x="10" y="2" width="2" height="2" fill="#bbb"/><rect x="6" y="6" width="2" height="2" fill="#bbb"/><rect x="10" y="6" width="2" height="2" fill="#bbb"/><rect x="2" y="10" width="2" height="2" fill="#bbb"/><rect x="6" y="10" width="2" height="2" fill="#bbb"/><rect x="10" y="10" width="2" height="2" fill="#bbb"/></svg>
</body></html>
